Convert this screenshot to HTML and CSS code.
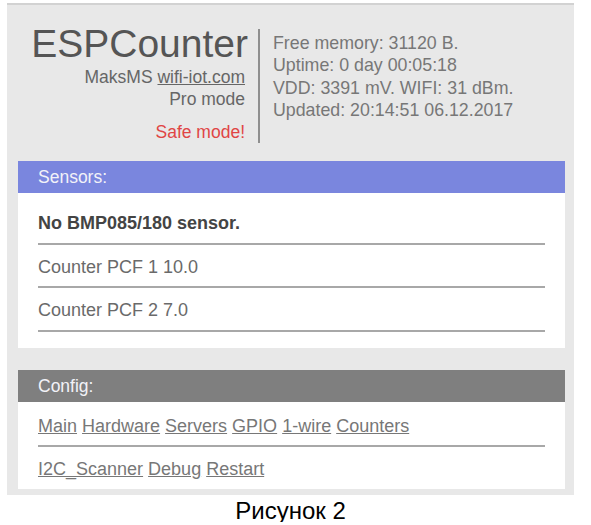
FILE: index.html
```html
<!DOCTYPE html>
<html>
<head>
<meta charset="utf-8">
<link rel="stylesheet" href="styles.css">
</head>
<body>
<div class="panel">
  <div class="head">
    <div class="brand">
      <div class="title">ESPCounter</div>
      <div class="sub">MaksMS <a class="lnk" href="#">wifi-iot.com</a></div>
      <div class="sub">Pro mode</div>
      <div class="sub safe">Safe mode!</div>
    </div>
    <div class="divider"></div>
    <div class="info">
      <div>Free memory: 31120 B.</div>
      <div>Uptime: 0 day 00:05:18</div>
      <div>VDD: 3391 mV. WIFI: 31 dBm.</div>
      <div>Updated: 20:14:51 06.12.2017</div>
    </div>
  </div>
  <div class="card">
    <div class="bar blue">Sensors:</div>
    <div class="body sensors">
      <div class="row bold">No BMP085/180 sensor.</div>
      <div class="row">Counter PCF 1 10.0</div>
      <div class="row">Counter PCF 2 7.0</div>
    </div>
  </div>
  <div class="card cfg">
    <div class="bar grey">Config:</div>
    <div class="body config">
      <div class="row"><a href="#">Main</a> <a href="#">Hardware</a> <a href="#">Servers</a> <a href="#">GPIO</a> <a href="#">1-wire</a> <a href="#">Counters</a></div>
      <div class="row last"><a href="#">I2C_Scanner</a> <a href="#">Debug</a> <a href="#">Restart</a></div>
    </div>
  </div>
</div>
<div class="caption">Рисунок 2</div>
</body>
</html>
```
FILE: styles.css
```css
html, body {
  margin: 0;
  padding: 0;
  background: #ffffff;
}
body {
  font-family: "Liberation Sans", Arial, sans-serif;
  font-size: 18px;
  color: #666;
}
.panel {
  margin: 3px 0 0 7px;
  width: 567px;
  box-sizing: border-box;
  background: #e8e8e8;
  border-top: 2px solid #d2d2d2;
  padding: 0 9px 6px 11px;
}
.head {
  display: flex;
  align-items: stretch;
  padding: 19px 0 0 13px;
  margin-bottom: 18px;
}
.brand {
  text-align: right;
  width: 217px;
}
.title {
  font-size: 39px;
  line-height: 39px;
  color: #555;
  height: 39px;
  margin-bottom: 3px;
}
.sub {
  line-height: 22px;
  padding-right: 3px;
  color: #666;
  font-size: 17.5px;
}
.lnk {
  color: #666;
}
.safe {
  color: #e04545;
  margin-top: 11px;
}
.divider {
  width: 2px;
  background: #8f8f8f;
  margin: 5px 0 0 10px;
}
.info {
  margin-left: 13px;
  padding-top: 8px;
  line-height: 22.3px;
  color: #777;
  font-size: 17.8px;
}
.card {
  background: #ffffff;
}
.cfg {
  margin-top: 22px;
}
.bar {
  height: 32px;
  line-height: 32px;
  padding-left: 20px;
  font-size: 17.5px;
  color: #f2f2f8;
}
.blue {
  background: #7a86de;
}
.grey {
  background: #7f7f7f;
}
.body {
  padding: 0 20px;
}
.sensors {
  padding-top: 8px;
  padding-bottom: 16px;
}
.config {
  padding-top: 2px;
}
.row {
  padding: 11px 0 7.5px;
  line-height: 23px;
  border-bottom: 2px solid #a8a8a8;
  color: #6a6a6a;
}
.row.last {
  border-bottom: none;
}
.bold {
  font-weight: bold;
  color: #444;
}
.config a {
  color: #777;
}
.caption {
  width: 567px;
  margin: 5px 0 0 7px;
  text-align: center;
  font-size: 24px;
  line-height: 22px;
  color: #000;
}
```
